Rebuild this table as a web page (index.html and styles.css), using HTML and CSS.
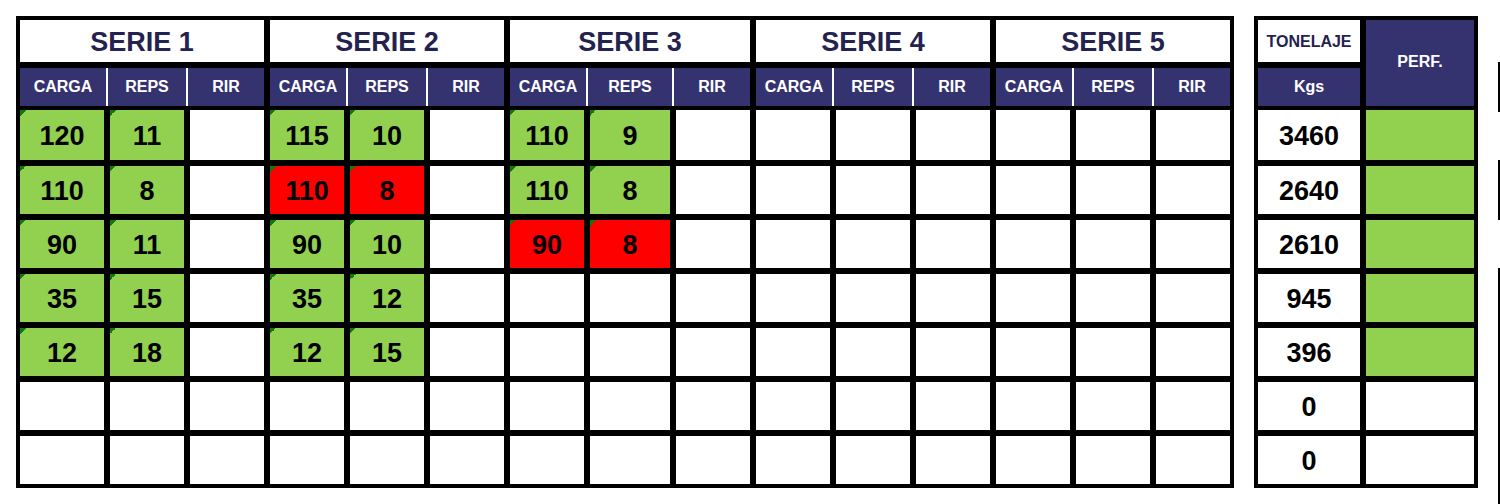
FILE: index.html
```html
<!DOCTYPE html>
<html lang="es">
<head>
<meta charset="utf-8">
<title>Series</title>
<link rel="stylesheet" href="styles.css">
</head>
<body>
<div class="page">
  <div class="series">
    <div class="serie s1">
      <div class="title">SERIE 1</div>
      <div class="sub"><div>CARGA</div><div>REPS</div><div>RIR</div></div>
      <div class="grid">
        <div class="c g">120</div><div class="c g">11</div><div class="c"></div>
        <div class="c g">110</div><div class="c g">8</div><div class="c"></div>
        <div class="c g">90</div><div class="c g">11</div><div class="c"></div>
        <div class="c g">35</div><div class="c g">15</div><div class="c"></div>
        <div class="c g">12</div><div class="c g">18</div><div class="c"></div>
        <div class="c"></div><div class="c"></div><div class="c"></div>
        <div class="c"></div><div class="c"></div><div class="c"></div>
      </div>
    </div>
    <div class="serie">
      <div class="title">SERIE 2</div>
      <div class="sub"><div>CARGA</div><div>REPS</div><div>RIR</div></div>
      <div class="grid">
        <div class="c g">115</div><div class="c g">10</div><div class="c"></div>
        <div class="c r">110</div><div class="c r">8</div><div class="c"></div>
        <div class="c g">90</div><div class="c g">10</div><div class="c"></div>
        <div class="c g">35</div><div class="c g">12</div><div class="c"></div>
        <div class="c g">12</div><div class="c g">15</div><div class="c"></div>
        <div class="c"></div><div class="c"></div><div class="c"></div>
        <div class="c"></div><div class="c"></div><div class="c"></div>
      </div>
    </div>
    <div class="serie s3">
      <div class="title">SERIE 3</div>
      <div class="sub"><div>CARGA</div><div>REPS</div><div>RIR</div></div>
      <div class="grid">
        <div class="c g">110</div><div class="c g">9</div><div class="c"></div>
        <div class="c g">110</div><div class="c g">8</div><div class="c"></div>
        <div class="c r">90</div><div class="c r">8</div><div class="c"></div>
        <div class="c"></div><div class="c"></div><div class="c"></div>
        <div class="c"></div><div class="c"></div><div class="c"></div>
        <div class="c"></div><div class="c"></div><div class="c"></div>
        <div class="c"></div><div class="c"></div><div class="c"></div>
      </div>
    </div>
    <div class="serie">
      <div class="title">SERIE 4</div>
      <div class="sub"><div>CARGA</div><div>REPS</div><div>RIR</div></div>
      <div class="grid">
        <div class="c"></div><div class="c"></div><div class="c"></div>
        <div class="c"></div><div class="c"></div><div class="c"></div>
        <div class="c"></div><div class="c"></div><div class="c"></div>
        <div class="c"></div><div class="c"></div><div class="c"></div>
        <div class="c"></div><div class="c"></div><div class="c"></div>
        <div class="c"></div><div class="c"></div><div class="c"></div>
        <div class="c"></div><div class="c"></div><div class="c"></div>
      </div>
    </div>
    <div class="serie">
      <div class="title">SERIE 5</div>
      <div class="sub"><div>CARGA</div><div>REPS</div><div>RIR</div></div>
      <div class="grid">
        <div class="c"></div><div class="c"></div><div class="c"></div>
        <div class="c"></div><div class="c"></div><div class="c"></div>
        <div class="c"></div><div class="c"></div><div class="c"></div>
        <div class="c"></div><div class="c"></div><div class="c"></div>
        <div class="c"></div><div class="c"></div><div class="c"></div>
        <div class="c"></div><div class="c"></div><div class="c"></div>
        <div class="c"></div><div class="c"></div><div class="c"></div>
      </div>
    </div>
  </div>

  <div class="summary">
    <div class="tcol">
      <div class="ttitle">TONELAJE</div>
      <div class="kgs">Kgs</div>
      <div class="col">
        <div class="c">3460</div>
        <div class="c">2640</div>
        <div class="c">2610</div>
        <div class="c">945</div>
        <div class="c">396</div>
        <div class="c">0</div>
        <div class="c">0</div>
      </div>
    </div>
    <div class="pcol">
      <div class="perf">PERF.</div>
      <div class="col">
        <div class="c pg"></div>
        <div class="c pg"></div>
        <div class="c pg"></div>
        <div class="c pg"></div>
        <div class="c pg"></div>
        <div class="c"></div>
        <div class="c"></div>
      </div>
    </div>
  </div>

  <div class="edge">
    <div class="seg seg1"></div>
    <div class="seg seg2"></div>
    <div class="seg seg3"></div>
  </div>
</div>
</body>
</html>
```

FILE: styles.css
```css
html, body {
  margin: 0;
  padding: 0;
  background: #ffffff;
  overflow: hidden;
}

body {
  font-family: "Liberation Sans", Arial, sans-serif;
  font-weight: bold;
}

.page {
  display: flex;
  align-items: flex-start;
  padding: 16px 0 0 16px;
  width: 1500px;
  height: 504px;
  box-sizing: border-box;
}

/* ---------- main series table ---------- */
.series {
  display: flex;
  gap: 6px;
  background: #000;
  padding: 4px;
}

.serie {
  display: flex;
  flex-direction: column;
  --h: 76px 78px 76px;
  --b: 74px 74px 74px;
}

.serie.s1 {
  --h: 86px 78px 76px;
  --b: 84px 74px 74px;
}

.serie.s3 {
  --h: 76px 84px 76px;
  --b: 74px 80px 74px;
}

.title {
  height: 42px;
  background: #fff;
  color: #24224f;
  font-size: 27px;
  display: flex;
  align-items: center;
  justify-content: center;
  padding-top: 2px;
  box-sizing: border-box;
}

.sub {
  margin-top: 6px;
  height: 38px;
  display: grid;
  grid-template-columns: var(--h);
  column-gap: 2px;
  background: #fff;
}

.sub > div,
.kgs,
.perf {
  background: #35336f;
  color: #fff;
  font-size: 16px;
  display: flex;
  align-items: center;
  justify-content: center;
}

.grid {
  margin-top: 4px;
  display: grid;
  grid-template-columns: var(--b);
  grid-template-rows: 50px repeat(6, 48px);
  gap: 6px;
}

.c {
  background: #fff;
  color: #000;
  font-size: 27px;
  display: flex;
  align-items: center;
  justify-content: center;
  padding-top: 3px;
  box-sizing: border-box;
}

.c.g {
  background: linear-gradient(135deg, #0c7a10 50%, transparent 50%) no-repeat left top / 6px 6px, #92d050;
}

.c.r {
  background: linear-gradient(135deg, #0c7a10 50%, transparent 50%) no-repeat left top / 6px 6px, #ff0000;
}

/* ---------- summary table ---------- */
.summary {
  margin-left: 20px;
  display: flex;
  gap: 6px;
  background: #000;
  padding: 4px;
}

.tcol,
.pcol {
  display: flex;
  flex-direction: column;
}

.tcol { width: 102px; }
.pcol { width: 108px; }

.ttitle {
  height: 42px;
  background: #fff;
  color: #24224f;
  font-size: 16px;
  display: flex;
  align-items: center;
  justify-content: center;
  padding-top: 2px;
  box-sizing: border-box;
}

.kgs {
  margin-top: 6px;
  height: 38px;
}

.perf {
  height: 86px;
  padding-bottom: 2px;
  box-sizing: border-box;
}

.col {
  margin-top: 4px;
  display: grid;
  grid-template-rows: 50px repeat(6, 48px);
  row-gap: 6px;
}

.c.pg {
  background: #92d050;
}

/* ---------- cut-off edge lines ---------- */
.edge {
  margin-left: 20px;
  width: 2px;
  display: flex;
  flex-direction: column;
  padding-top: 46px;
}

.seg { background: #000; width: 2px; }
.seg1 { height: 50px; }
.seg2 { height: 60px; margin-top: 48px; }
.seg3 { height: 236px; margin-top: 48px; }
```
